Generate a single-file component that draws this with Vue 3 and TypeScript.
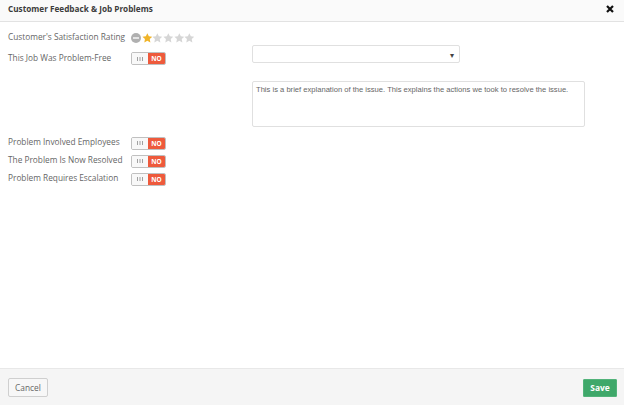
<script setup lang="ts">
const starPath = 'M5 .2l1.5 3.1 3.4.45-2.5 2.35.62 3.4L5 7.85 1.98 9.5l.62-3.4-2.5-2.35 3.4-.45z'
const stars: boolean[] = [true, false, false, false, false]
const topRows: string[] = ['This Job Was Problem-Free']
const bottomRows: string[] = ['Problem Involved Employees', 'The Problem Is Now Resolved', 'Problem Requires Escalation']
</script>

<template>
  <div class="modal">
    <header class="head">
      <h1>Customer Feedback &amp; Job Problems</h1>
      <svg class="close" width="8" height="8" viewBox="0 0 8 8"><path d="M1 1l6 6M7 1L1 7" stroke="#111" stroke-width="2.2" /></svg>
    </header>
    <main class="body">
      <div class="left">
        <div class="row rating">
          <label>Customer's Satisfaction Rating</label>
          <div class="stars">
            <svg class="clear" width="10" height="10" viewBox="0 0 10 10"><circle cx="5" cy="5" r="5" fill="#b0b0b0" /><rect x="2" y="4" width="6" height="2" fill="#e4e4e4" /></svg>
            <svg v-for="(on, i) in stars" :key="i" class="star" width="10.7" height="10" viewBox="0 0 10 10"><path :d="starPath" :fill="on ? '#f0b429' : '#d6d6d6'" /></svg>
          </div>
        </div>
        <div v-for="t in topRows" :key="t" class="row">
          <label>{{ t }}</label>
          <div class="toggle"><span class="grip"><svg width="6" height="4" viewBox="0 0 6 4"><path d="M.5 0v4M3 0v4M5.5 0v4" stroke="#a0a0a0" /></svg></span><span class="no">NO</span></div>
        </div>
        <div class="group">
          <div v-for="t in bottomRows" :key="t" class="row tall">
            <label>{{ t }}</label>
            <div class="toggle"><span class="grip"><svg width="6" height="4" viewBox="0 0 6 4"><path d="M.5 0v4M3 0v4M5.5 0v4" stroke="#a0a0a0" /></svg></span><span class="no">NO</span></div>
          </div>
        </div>
      </div>
      <div class="right">
        <div class="select"><span class="caret">▾</span></div>
        <div class="textarea">This is a brief explanation of the issue. This explains the actions we took to resolve the issue.</div>
      </div>
    </main>
    <footer class="foot">
      <button class="cancel">Cancel</button>
      <button class="save">Save</button>
    </footer>
  </div>
</template>

<style>
html, body { margin: 0; background: #fff; }
</style>

<style scoped>
.modal {
  width: 624px;
  height: 405px;
  display: flex;
  flex-direction: column;
  font-family: "Open Sans", sans-serif;
  color: #555;
  background: #fff;
  overflow: hidden;
}
.head {
  height: 22px;
  flex: none;
  display: flex;
  align-items: center;
  justify-content: space-between;
  padding: 0 10px 4px 8px;
  box-sizing: border-box;
  background: #fafafa;
  border-bottom: 1px solid #e2e2e2;
}
.head h1 { margin: 0; font-size: 8.2px; font-weight: 700; color: #3c3c3c; white-space: nowrap; }
.close { display: block; }
.body { flex: 1; display: flex; padding: 9px 0 0 8px; }
.left { width: 244px; flex: none; }
.row { display: flex; align-items: center; height: 17px; }
.row.tall { height: 18px; }
.row label { width: 123px; flex: none; font-size: 8.3px; line-height: 12px; color: #666; white-space: nowrap; padding-bottom: 2px; box-sizing: border-box; }
.rating { height: 13px; margin-bottom: 6px; }
.stars { display: flex; align-items: center; }
.clear { margin-right: 0.5px; }
.star { display: block; }
.group { margin-top: 67px; }
.toggle {
  display: flex;
  width: 35px;
  height: 13px;
  box-sizing: border-box;
  border: 1px solid #c0c0c0;
  border-radius: 2px;
  overflow: hidden;
  font-size: 6.5px;
  line-height: 11px;
  text-align: center;
}
.grip { width: 16px; background: #f8f8f8; display: flex; align-items: center; justify-content: center; }
.no { flex: 1; background: #ee5a3c; color: #fff; font-weight: 700; }
.right { display: flex; flex-direction: column; padding-top: 14px; }
.select {
  width: 208px;
  height: 18px;
  box-sizing: border-box;
  border: 1px solid #e0e0e0;
  border-radius: 2px;
  display: flex;
  align-items: center;
  justify-content: flex-end;
  padding-right: 5px;
}
.caret { font-size: 8px; color: #444; }
.textarea {
  width: 333px;
  height: 46px;
  margin-top: 18px;
  box-sizing: border-box;
  border: 1px solid #e0e0e0;
  border-radius: 2px;
  padding: 2px 3px;
  font-family: "Liberation Sans", sans-serif;
  font-size: 7.6px;
  line-height: 12px;
  color: #666;
  white-space: nowrap;
}
.foot {
  height: 37px;
  flex: none;
  box-sizing: border-box;
  display: flex;
  align-items: center;
  justify-content: space-between;
  padding: 1px 7px 0 8px;
  background: #f5f5f5;
  border-top: 1px solid #e8e8e8;
}
button { font-family: "Open Sans", sans-serif; font-size: 8.4px; padding: 0; box-sizing: border-box; }
.cancel { width: 40px; height: 19px; background: #f7f7f7; border: 1px solid #cfcfcf; border-radius: 2px; color: #666; }
.save { width: 34px; height: 18px; background: #3fa86a; border: 1px solid #52b37a; border-radius: 1px; color: #fff; font-weight: 700; }
</style>
